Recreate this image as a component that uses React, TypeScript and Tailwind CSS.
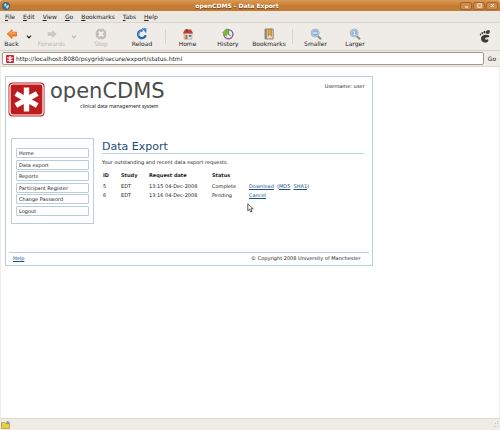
import type { ReactNode } from 'react';

const menus = ['File', 'Edit', 'View', 'Go', 'Bookmarks', 'Tabs', 'Help'];
const navigation = ['Home', 'Data export', 'Reports', 'Participant Register', 'Change Password', 'Logout'];

function Tool({ label, width, disabled = false, children }: { label: string; width: string; disabled?: boolean; children: ReactNode }) {
  return (
    <button
      type="button"
      disabled={disabled}
      className={`flex h-full ${width} shrink-0 flex-col items-center pt-[5px] text-[6px] leading-[8px] ${disabled ? 'text-[#bdb7ae]' : 'text-[#222]'}`}
    >
      <svg viewBox="0 0 12 12" className="size-[12px]" aria-hidden="true">{children}</svg>
      <span>{label}</span>
    </button>
  );
}

function Chevron({ disabled = false }: { disabled?: boolean }) {
  return (
    <button type="button" disabled={disabled} aria-label="History list" className="flex h-full w-[12px] shrink-0 items-center justify-center">
      <svg viewBox="0 0 6 4" className="h-[4px] w-[6px]" fill="none" stroke={disabled ? '#bdb7ae' : '#222'} strokeWidth="1.2">
        <path d="M1 .7 3 2.8 5 .7" />
      </svg>
    </button>
  );
}

function Magnifier({ mark }: { mark: ReactNode }) {
  return (
    <>
      <path d="m7.5 8 3 2.7" stroke="#8b8d89" strokeWidth="2" strokeLinecap="round" />
      <circle cx="5.2" cy="5" r="4" fill="#c3dcf4" stroke="#b0b6ba" strokeWidth="1" />
      <circle cx="5.2" cy="5" r="2.9" fill="#86b4e4" />
      {mark}
    </>
  );
}

function TitleBar() {
  return (
    <header className="flex h-[11px] items-center rounded-t-[2px] bg-linear-to-b from-[#dc9a55] via-[#c67d33] to-[#bf7a35] px-[2px]">
      <svg viewBox="0 0 8 8" className="size-[8px] shrink-0" aria-hidden="true">
        <circle cx="4" cy="4" r="3.7" fill="#3974a8" stroke="#20527c" strokeWidth=".5" />
        <path d="M2 2.2 3.8 1l.6 1.8L3 5zM4.8 3.5l1.8-.8.4 1.8-1.6 2z" fill="#c9e2a2" />
        <path d="m3.5 2.5 2.4 3.7-1.1.2z" fill="#fff" />
      </svg>
      <h1 className="flex-1 pl-[4px] text-center text-[6px] leading-[10px] font-bold text-white [text-shadow:0_1px_1px_#6b3a0c]">openCDMS - Data Export</h1>
      <div className="flex gap-[1px]">
        {['Minimize', 'Maximize', 'Close'].map((name) => (
          <button key={name} type="button" aria-label={name} className="flex h-[8px] w-[12px] items-center justify-center rounded-[2px] border border-[#a3652b] bg-[#cd8c4b]">
            <svg viewBox="0 0 5 5" className="size-[5px] shrink-0" fill="none" stroke="#fff" strokeWidth="1">
              {name === 'Minimize' && <path d="M1 4h3" />}
              {name === 'Maximize' && <rect x=".8" y=".8" width="3.4" height="3.4" strokeWidth=".8" />}
              {name === 'Close' && <path d="m1 1 3 3m0-3L1 4" />}
            </svg>
          </button>
        ))}
      </div>
    </header>
  );
}

function Toolbar() {
  return (
    <div className="flex h-[28px] border-b border-[#d8d1c9]">
      <Tool label="Back" width="w-[23px]">
        <path d="M1.2 6 6 1.7v2.5h4.5v3.9H6v2.5z" fill="#f6872d" stroke="#cf5f12" strokeWidth=".7" />
        <path d="M2.8 5.8 5.3 3.6v1.5h4.4" fill="none" stroke="#ffc28a" strokeWidth=".8" />
      </Tool>
      <Chevron />
      <Tool label="Forwards" width="w-[33px]" disabled>
        <path d="M10.8 6 6 1.9v2.4H1.7v3.6H6v2.4z" fill="#cbc7c1" />
      </Tool>
      <Chevron disabled />
      <Tool label="Stop" width="w-[42px]" disabled>
        <path d="M3.6.8h4.8l2.8 2.8v4.8l-2.8 2.8H3.6L.8 8.4V3.6z" fill="#c3beb8" />
        <path d="m3.7 3.7 4.6 4.6m0-4.6L3.7 8.3" stroke="#f8f6f4" strokeWidth="1.7" />
      </Tool>
      <Tool label="Reload" width="w-[40px]">
        <path d="M9.6 7.2A3.8 3.8 0 1 1 6.6 2.6" fill="none" stroke="#2668b4" strokeWidth="2.4" />
        <path d="m5.8.2 4.8.1L10.2 5.2z" fill="#3e83cd" />
        <path d="M2.8 8a3.6 3.6 0 0 1 2.8-5.3" fill="none" stroke="#8ab8e8" strokeWidth=".7" />
      </Tool>
      <span className="my-[6px] ml-[3px] w-px bg-[#dad4cc]" />
      <Tool label="Home" width="w-[43px]">
        <path d="M2.2 5h7.6v6H2.2z" fill="#eee" stroke="#888" strokeWidth=".6" />
        <path d="M.8 5.6 3 1.5h6l2.2 4.1z" fill="#be3f2e" />
        <path d="M4 1h1.4v3H4z" fill="#7b3c30" />
        <path d="M3.3 6.8h2.2V11H3.3z" fill="#cf6427" />
        <path d="M6.8 6.8h2.1v2.1H6.8z" fill="#3c6ea7" />
      </Tool>
      <Tool label="History" width="w-[38px]">
        <circle cx="6.4" cy="6.3" r="4.5" fill="#f1eef2" stroke="#8a6a94" strokeWidth="1.5" />
        <path d="M6.5 3v3.5l2.3 1.3" fill="none" stroke="#625568" strokeWidth=".9" />
        <path d="M.6 4.6 4.7.5v2.2h2v3.4h-2v2.4z" fill="#73c42c" stroke="#4c9318" strokeWidth=".4" />
      </Tool>
      <Tool label="Bookmarks" width="w-[44px]">
        <path d="M2 1h8.2v10H2z" fill="#e6d6b5" stroke="#83745d" strokeWidth=".8" />
        <path d="M2.3 1.3h1.4v9.4H2.3z" fill="#77736c" />
        <path d="M5 1.2h3.6v7L6.8 6 5 8.2z" fill="#efa02b" stroke="#80694b" strokeWidth=".5" />
      </Tool>
      <span className="my-[6px] ml-[1px] w-px bg-[#dad4cc]" />
      <Tool label="Smaller" width="w-[45px]">
        <Magnifier mark={<path d="M3.3 5h3.8" stroke="#fff" strokeWidth="1" />} />
      </Tool>
      <Tool label="Larger" width="w-[34px]">
        <Magnifier mark={<path d="M4.2 3.7h1.2v3M4 6.7h2.7" fill="none" stroke="#fff" strokeWidth=".9" />} />
      </Tool>
      <svg viewBox="0 0 12 13" className="my-auto mr-[9px] ml-auto h-[13px] w-[12px]" fill="#3a3a3a" aria-label="GNOME">
        <ellipse cx="8.9" cy="2" rx="2.1" ry="1.7" transform="rotate(-35 8.9 2)" />
        <ellipse cx="5.5" cy="2.2" rx=".9" ry="1.4" />
        <ellipse cx="3.3" cy="3.1" rx=".8" ry="1.2" />
        <ellipse cx="1.5" cy="4.4" rx=".7" ry="1" />
        <path d="M10 5.5C7.3 3.8 2 4.9 2 8.5c0 2.8 2.3 4.4 4.8 4.1 2.2-.3 3.2-2.3 2.4-3.2-.7-.8-1.5.5-2.5.2-1.2-.4-.8-1.8 1-2C9.6 7.4 11.3 6.6 10 5.5z" />
      </svg>
    </div>
  );
}

function AddressBar() {
  return (
    <form className="flex h-[15px] items-center pl-[2px]" onSubmit={(event) => event.preventDefault()}>
      <div className="flex h-[13px] flex-1 items-center gap-[2px] rounded-[2px] border border-[#a59689] bg-white pl-[3px]">
        <svg viewBox="0 0 8 8" className="size-[8px] shrink-0" aria-hidden="true">
          <rect width="8" height="8" rx="1" fill="#cf2935" />
          <path d="M4 1v6M1.4 2.5l5.2 3M6.6 2.5l-5.2 3" stroke="#fff" strokeWidth="1.4" />
        </svg>
        <input aria-label="Address" defaultValue="http://localhost:8080/psygrid/secure/export/status.html" className="h-[10px] min-w-0 flex-1 bg-transparent text-[6px] leading-[10px] text-[#222] outline-none" />
      </div>
      <button type="submit" className="w-[16px] text-[6px] leading-[10px]">Go</button>
    </form>
  );
}

function Brand() {
  return (
    <div className="flex items-start gap-[5px]">
      <svg viewBox="0 0 37 35" className="mt-[2px] h-[35px] w-[37px]" aria-hidden="true">
        <rect x=".5" y=".5" width="36" height="34" rx="4" fill="#bd1c1e" />
        <rect x="2" y="2" width="33" height="31" rx="3" fill="none" stroke="#fff" strokeWidth="1.2" />
        <path d="M18.5 5.5v24M7.8 11.5l21.4 12M29.2 11.5l-21.4 12" stroke="#fff" strokeWidth="5.4" />
      </svg>
      <div className="text-[#4b4b4b]">
        <p className="text-[21px] leading-[22px]">openCDMS</p>
        <p className="pl-[30px] font-['Noto_Sans','Liberation_Sans',sans-serif] text-[5px] leading-[8px] text-[#222]">clinical data management system</p>
      </div>
    </div>
  );
}

function ExportTable() {
  const link = 'text-[#1c4f86] underline';
  return (
    <table className="mt-[4px] table-fixed border-collapse text-left text-[5px] leading-[7px]">
      <colgroup>
        <col className="w-[18px]" /><col className="w-[28px]" /><col className="w-[63px]" /><col className="w-[37px]" /><col className="w-[80px]" />
      </colgroup>
      <thead>
        <tr className="h-[11px]"><th>ID</th><th>Study</th><th>Request date</th><th>Status</th><td /></tr>
      </thead>
      <tbody>
        <tr className="h-[10px]">
          <td>5</td><td>EDT</td><td>13:15 04-Dec-2008</td><td>Complete</td>
          <td><a href="#download" className={link}>Download</a>&nbsp; (<a href="#md5" className={link}>MD5</a>&nbsp; <a href="#sha1" className={link}>SHA1</a>)</td>
        </tr>
        <tr className="h-[9px]">
          <td>6</td><td>EDT</td><td>13:16 04-Dec-2008</td><td>Pending</td>
          <td><a href="#cancel" className={link}>Cancel</a></td>
        </tr>
      </tbody>
    </table>
  );
}

export default function App() {
  return (
    <div className="flex min-h-screen flex-col bg-[#efebe7] font-['DejaVu_Sans',sans-serif] text-[#222]">
      <TitleBar />
      <nav aria-label="Application menu" className="flex h-[12px] items-center gap-[8px] border-b border-[#dcd6cf] bg-[#ebe7e2] px-[5px]">
        {menus.map((menu) => (
          <button key={menu} type="button" className="text-[6px] leading-[10px]"><u>{menu[0]}</u>{menu.slice(1)}</button>
        ))}
      </nav>
      <Toolbar />
      <AddressBar />
      <main className="mx-px flex-1 border-t border-[#ded8d1] bg-white px-[4px] pt-[9px]">
        <div className="w-3/4 border border-[#b9cfd8]">
          <div className="flex items-start justify-between pt-[3px] pr-[7px] pl-[2px]">
            <Brand />
            <p className="pt-[3px] text-[5px] leading-[7px]">Username: user</p>
          </div>
          <div className="flex items-start gap-[8px] pt-[21px] pl-[5px]">
            <nav aria-label="Site" className="flex h-[86px] w-[83px] shrink-0 flex-col justify-between border border-[#b9cfd8] px-[4px] pt-[9px] pb-[7px]">
              {navigation.map((item) => (
                <a key={item} href="#" className="h-[10px] rounded-[1px] border border-[#b9cfd8] pl-[2px] text-[5px] leading-[8px]">{item}</a>
              ))}
            </nav>
            <section className="relative min-w-0 flex-1 pt-[2px]">
              <h2 className="mr-[8px] border-b border-[#b9d3d8] text-[11px] leading-[13px] text-[#234b76]">Data Export</h2>
              <p className="mt-[4px] text-[5px] leading-[8px]">Your outstanding and recent data export requests.</p>
              <div className="pl-[1px]"><ExportTable /></div>
              <svg viewBox="0 0 7 10" className="absolute top-[65px] left-[145px] h-[10px] w-[7px]" aria-hidden="true">
                <path d="M.8.8v7l1.7-1.6L3.7 9l1.3-.6-1.2-2.6h2.4z" fill="#fff" stroke="#333" strokeWidth=".8" />
              </svg>
            </section>
          </div>
          <footer className="mx-[3px] mt-[28px] flex h-[13px] items-start justify-between border-t border-[#b9cfd8] pt-[2px] pr-[8px] pl-[4px] text-[5px] leading-[7px]">
            <a href="#help" className="text-[#1c4f86] underline">Help</a>
            <p>© Copyright 2008 University of Manchester</p>
          </footer>
        </div>
      </main>
      <footer className="flex h-[12px] items-center justify-between border-t border-[#ded8d1] px-[1px]">
        <svg viewBox="0 0 10 9" className="h-[9px] w-[10px]" aria-hidden="true">
          <path d="M.5 2.5h3l1 1h4v5h-8z" fill="#e5cf45" stroke="#9b8718" strokeWidth=".6" />
          <path d="M5 2.2 7.2.5v1.2h1.3v2H7.2v1z" fill="#8f9296" />
        </svg>
        <svg viewBox="0 0 7 7" className="h-[7px] w-[7px]" fill="#c9c2b9" aria-hidden="true">
          <path d="M5 0h1v1H5zM3 2h1v1H3zM5 2h1v1H5zM1 5h1v1H1zM3 5h1v1H3zM5 5h1v1H5z" />
        </svg>
      </footer>
    </div>
  );
}
